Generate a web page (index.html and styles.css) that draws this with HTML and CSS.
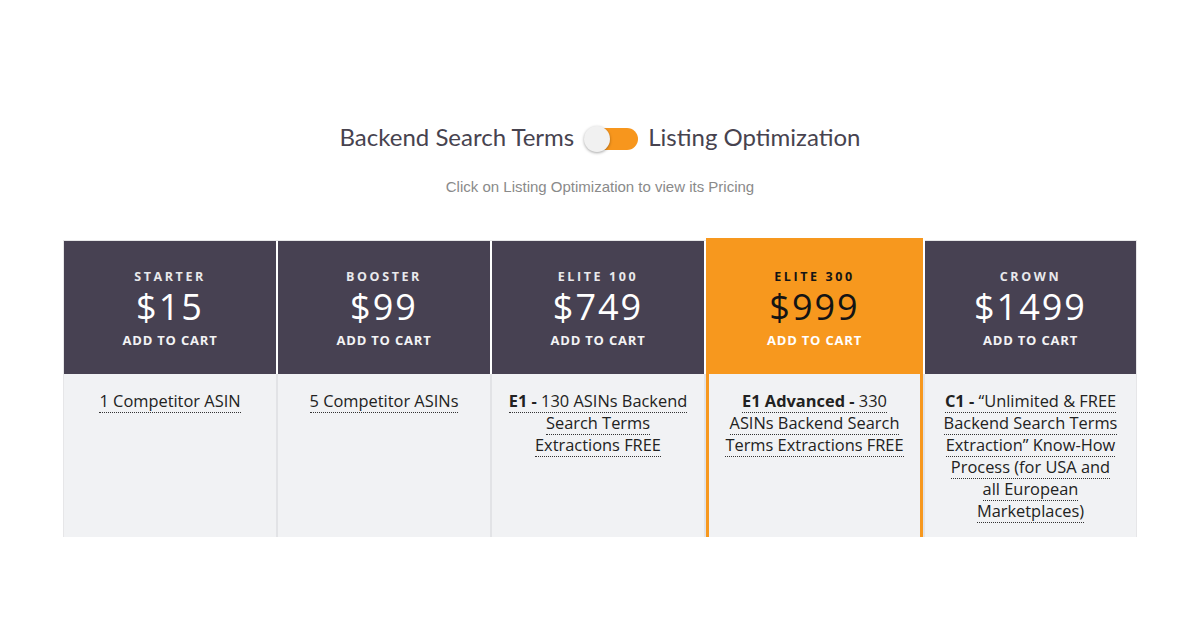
FILE: index.html
```html
<!DOCTYPE html>
<html lang="en">
<head>
<meta charset="utf-8">
<title>Pricing</title>
<link rel="stylesheet" href="styles.css">
</head>
<body>
<div class="page">
  <div class="switcher">
    <span class="sw-label">Backend Search Terms</span>
    <span class="toggle"><span class="knob"></span></span>
    <span class="sw-label">Listing Optimization</span>
  </div>
  <p class="hint">Click on Listing Optimization to view its Pricing</p>

  <div class="plans">
    <div class="plan">
      <div class="plan-head">
        <div class="plan-name">STARTER</div>
        <div class="plan-price">$15</div>
        <div class="plan-cta">ADD TO CART</div>
      </div>
      <div class="plan-body"><span class="feat">1 Competitor ASIN</span></div>
    </div>
    <div class="plan">
      <div class="plan-head">
        <div class="plan-name">BOOSTER</div>
        <div class="plan-price">$99</div>
        <div class="plan-cta">ADD TO CART</div>
      </div>
      <div class="plan-body"><span class="feat">5 Competitor ASINs</span></div>
    </div>
    <div class="plan">
      <div class="plan-head">
        <div class="plan-name">ELITE 100</div>
        <div class="plan-price">$749</div>
        <div class="plan-cta">ADD TO CART</div>
      </div>
      <div class="plan-body"><span class="feat"><b>E1 -</b> 130 ASINs Backend Search Terms Extractions FREE</span></div>
    </div>
    <div class="plan featured">
      <div class="plan-head">
        <div class="plan-name">ELITE 300</div>
        <div class="plan-price">$999</div>
        <div class="plan-cta">ADD TO CART</div>
      </div>
      <div class="plan-body"><span class="feat"><b>E1 Advanced -</b> 330 ASINs Backend Search Terms Extractions FREE</span></div>
    </div>
    <div class="plan">
      <div class="plan-head">
        <div class="plan-name">CROWN</div>
        <div class="plan-price">$1499</div>
        <div class="plan-cta">ADD TO CART</div>
      </div>
      <div class="plan-body"><span class="feat"><b>C1 -</b> “Unlimited &amp; FREE Backend Search Terms Extraction” Know-How Process (for USA and all European Marketplaces)</span></div>
    </div>
  </div>
</div>
</body>
</html>
```

FILE: styles.css
```css
* { box-sizing: border-box; }

html, body {
  margin: 0;
  padding: 0;
  background: #ffffff;
}

.page {
  width: 1200px;
  padding-top: 121px;
}

.switcher {
  display: flex;
  justify-content: center;
  align-items: center;
  gap: 10px;
  height: 32px;
}

.sw-label {
  font-family: Lato, "Open Sans", sans-serif;
  font-size: 24px;
  color: #47434f;
  line-height: 32px;
}

.toggle {
  display: flex;
  align-items: center;
  width: 49px;
  height: 22px;
  margin-left: 5px;
  margin-top: 3px;
  background: #f7961d;
  border-radius: 11px;
}

.knob {
  width: 26px;
  height: 26px;
  margin-left: -5px;
  border-radius: 50%;
  background: #f1f1f1;
  box-shadow: 0 1px 3px rgba(0, 0, 0, 0.35);
}

.hint {
  margin: 0;
  padding-top: 25px;
  text-align: center;
  font-family: "Liberation Sans", Arial, sans-serif;
  font-size: 15px;
  line-height: 18px;
  color: #8a8a8a;
}

.plans {
  width: 1074px;
  margin: 44px auto 0;
  display: grid;
  grid-template-columns: 214px 214px 214px 219px 1fr;
  border: 1px solid #e6e6e8;
  border-bottom: none;
}

.plan {
  display: flex;
  flex-direction: column;
  font-family: "Open Sans", sans-serif;
  text-align: center;
}

.plan-head {
  background: #474152;
  color: #f3f3f5;
  padding: 28px 8px 25px;
  border-right: 2px solid #ffffff;
}

.plan:last-child .plan-head { border-right: none; }

.plan-name {
  font-size: 12.5px;
  font-weight: 700;
  letter-spacing: 2.6px;
  line-height: 16px;
  color: #e9e9ec;
}

.plan-price {
  margin-top: 2px;
  font-size: 36px;
  letter-spacing: 2px;
  line-height: 40px;
  color: #ffffff;
}

.plan-cta {
  margin-top: 4px;
  font-size: 13px;
  font-weight: 700;
  letter-spacing: 0.8px;
  line-height: 18px;
  color: #f3f3f5;
}

.plan-body {
  flex: 1;
  background: #f1f2f4;
  padding: 16px 16px 15px;
  border-right: 2px solid #e2e3e6;
  font-size: 16.4px;
  line-height: 22px;
  color: #222222;
}

.plan:last-child .plan-body { border-right: none; }

.feat {
  border-bottom: 1px dotted #333333;
}

.feat b { font-weight: 700; }

.featured {
  margin-top: -3px;
  position: relative;
  z-index: 1;
}

.featured .plan-head {
  background: #f7981e;
  padding-top: 31px;
}

.featured .plan-name,
.featured .plan-price {
  color: #141414;
}

.featured .plan-cta {
  color: #ffffff;
}

.featured .plan-body {
  box-shadow: inset 3px 0 0 #f7981e, inset -3px 0 0 #f7981e;
}
```
